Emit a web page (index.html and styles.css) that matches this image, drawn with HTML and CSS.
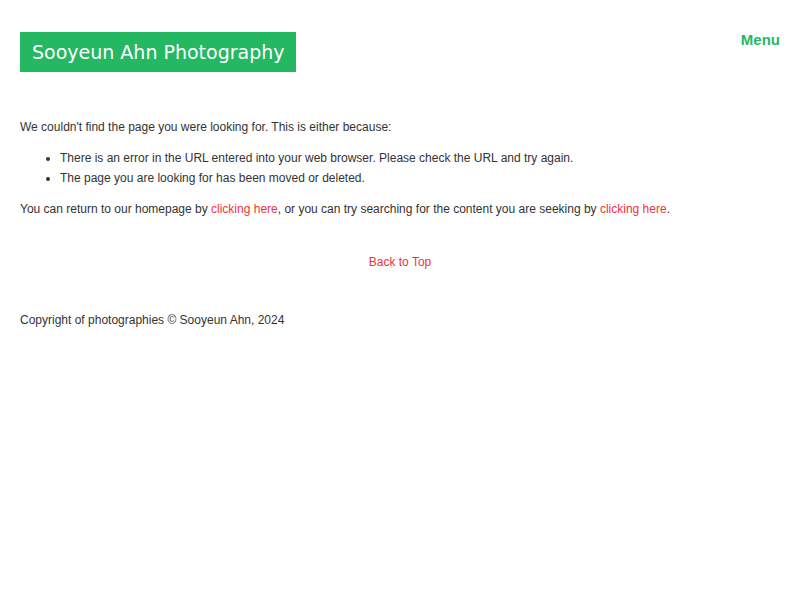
FILE: index.html
```html
<!DOCTYPE html>
<html lang="en">
<head>
<meta charset="utf-8">
<title>Page not found - Sooyeun Ahn Photography</title>
<link rel="stylesheet" href="styles.css">
</head>
<body>
<header class="site-header">
  <a class="logo" href="#">Sooyeun Ahn Photography</a>
  <a class="menu" href="#">Menu</a>
</header>
<main class="content">
  <p>We couldn't find the page you were looking for. This is either because:</p>
  <ul class="reasons">
    <li>There is an error in the URL entered into your web browser. Please check the URL and try again.</li>
    <li>The page you are looking for has been moved or deleted.</li>
  </ul>
  <p>You can return to our homepage by <a href="#">clicking here</a>, or you can try searching for the content you are seeking by <a href="#">clicking here</a>.</p>
</main>
<div class="back-top"><a href="#">Back to Top</a></div>
<footer class="footer">Copyright of photographies © Sooyeun Ahn, 2024</footer>
</body>
</html>
```
FILE: styles.css
```css
html, body {
  margin: 0;
  padding: 0;
  background: #fff;
}
body {
  font-family: "Liberation Sans", Arial, sans-serif;
  font-size: 12px;
  color: #333;
  padding: 32px 20px 0 20px;
}
a {
  color: #f0313c;
  text-decoration: none;
}
.site-header {
  display: flex;
  justify-content: space-between;
  align-items: flex-start;
}
.logo {
  display: block;
  background: #24b862;
  color: #fff;
  font-family: "DejaVu Sans", Verdana, sans-serif;
  font-size: 19px;
  line-height: 40px;
  height: 40px;
  padding: 0 11px 0 12px;
  white-space: nowrap;
}
.menu {
  color: #24b862;
  font-weight: bold;
  font-size: 15px;
  line-height: 16px;
}
.content {
  margin-top: 47px;
}
.content p {
  margin: 0;
  line-height: 16px;
}
.reasons {
  margin: 13px 0 13px 0;
  padding-left: 40px;
}
.reasons li {
  line-height: 20px;
}
.back-top {
  text-align: center;
  margin-top: 37px;
  line-height: 16px;
}
.footer {
  margin-top: 42px;
  line-height: 16px;
}
```
